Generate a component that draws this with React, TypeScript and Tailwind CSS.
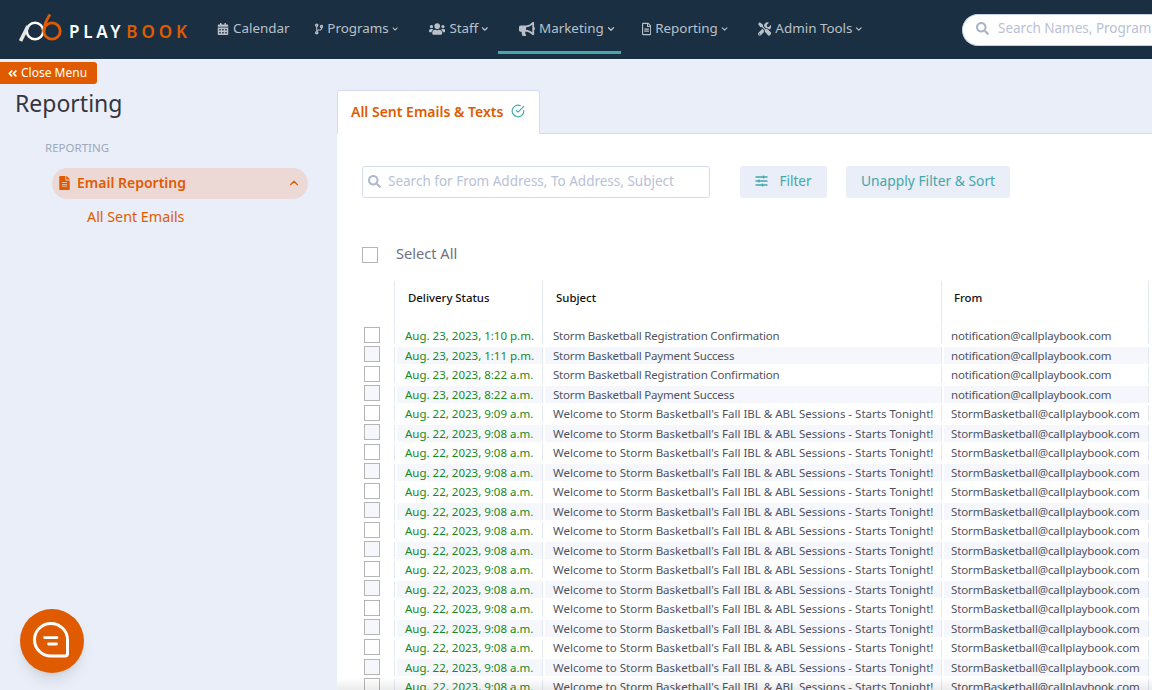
import React from "react";
import { FaCalendarAlt, FaUsers, FaBullhorn, FaTools, FaSearch, FaFileAlt, FaAngleDoubleLeft, FaRegFileAlt, FaCodeBranch } from "react-icons/fa";
import { FiChevronDown, FiChevronUp, FiCheckCircle } from "react-icons/fi";

const font = "font-['Noto_Sans',sans-serif]";

function Nav({ icon, label, active, w }: { icon: React.ReactNode; label: string; active?: boolean; w: string }) {
  return (
    <div className={`relative flex h-full shrink-0 items-center gap-1 whitespace-nowrap pb-[2px] text-[13.4px] text-[#b9c0c9] ${w}`}>
      {icon}
      <span>{label}</span>
      {label !== "Calendar" && <FiChevronDown className="-ml-[2px] h-2.5 w-2.5" strokeWidth={3} />}
      {active && <div className="absolute bottom-[5px] left-0 h-[3px] w-full bg-[#43a7ab]" />}
    </div>
  );
}

const first = [
  ["Aug. 23, 2023, 1:10 p.m.", "Storm Basketball Registration Confirmation", "notification@callplaybook.com"],
  ["Aug. 23, 2023, 1:11 p.m.", "Storm Basketball Payment Success", "notification@callplaybook.com"],
  ["Aug. 23, 2023, 8:22 a.m.", "Storm Basketball Registration Confirmation", "notification@callplaybook.com"],
  ["Aug. 23, 2023, 8:22 a.m.", "Storm Basketball Payment Success", "notification@callplaybook.com"],
  ["Aug. 22, 2023, 9:09 a.m.", "Welcome to Storm Basketball's Fall IBL & ABL Sessions - Starts Tonight!", "StormBasketball@callplaybook.com"],
];
const rows = [
  ...first,
  ...Array.from({ length: 14 }, () => [
    "Aug. 22, 2023, 9:08 a.m.",
    "Welcome to Storm Basketball's Fall IBL & ABL Sessions - Starts Tonight!",
    "StormBasketball@callplaybook.com",
  ]),
];

export default function App() {
  return (
    <div className={`relative h-[690px] w-[1152px] overflow-hidden bg-[#e9eef8] ${font}`}>
      <header className="flex h-[59px] items-center bg-[#1a3042] pl-[19px]">
        <svg width="46" height="34" viewBox="19 12 46 34" className="mr-[4px] shrink-0" fill="none">
          <circle cx="35" cy="30" r="8.2" stroke="#fff" strokeWidth="2.4" />
          <path d="M20.5 40 L28 25" stroke="#e6e6e6" strokeWidth="3.6" />
          <circle cx="52" cy="30" r="8.2" stroke="#e05b00" strokeWidth="2.8" />
          <path d="M43.8 30 C44 23 47 18 50 13.5" stroke="#e05b00" strokeWidth="2.8" />
        </svg>
        <div className="mr-[28px] mt-[3px] flex w-[120px] shrink-0 text-[17px] font-semibold leading-none">
          <span className="tracking-[0.22em] text-white">PLAY</span>
          <span className="ml-[2px] tracking-[0.23em] text-[#e05b00]">BOOK</span>
        </div>
        <Nav w="w-[73px]" label="Calendar" icon={<FaCalendarAlt className="h-3 w-3" />} />
        <Nav w="w-[84px] ml-[25px]" label="Programs" icon={<FaCodeBranch className="h-[14px] w-[10px]" />} />
        <Nav w="w-[61px] ml-[30px]" label="Staff" icon={<FaUsers className="h-4 w-[17px]" />} />
        <Nav w="w-[123px] ml-[8px] pl-[21px]" active label="Marketing" icon={<FaBullhorn className="h-4 w-4" />} />
        <Nav w="w-[87px] ml-[21px]" label="Reporting" icon={<FaRegFileAlt className="h-[14px] w-[10px]" />} />
        <Nav w="w-[106px] ml-[29px]" label="Admin Tools" icon={<FaTools className="h-3.5 w-3.5" />} />
        <div className="ml-[98px] flex h-[32px] min-w-0 flex-1 items-center overflow-hidden whitespace-nowrap rounded-l-full border border-r-0 border-[#c9d2e4] bg-white pb-[2px] pl-[13px] text-[13.5px] text-[#b8c1d8]">
          <FaSearch className="mr-[9px] h-[13px] w-[13px] shrink-0 text-[#aab4c8]" />
          Search Names, Programs
        </div>
      </header>

      <div className="flex h-[631px]">
        <aside className="relative w-[337px] shrink-0">
          <div className="absolute left-0 top-[3px] flex h-[22px] w-[97px] items-center gap-[3px] rounded-r-[3px] bg-[#e05b00] pl-[7px] text-[12px] text-white">
            <FaAngleDoubleLeft className="h-[11px] w-[11px]" />
            Close Menu
          </div>
          <h1 className="pl-[15px] pt-[28px] text-[23px] leading-[32px] text-[#33363f]">Reporting</h1>
          <div className="pl-[45px] pt-[21px] text-[11.5px] leading-[16px] text-[#a0a8bc]">REPORTING</div>
          <div className="ml-[52px] mt-[12px] flex h-[31px] w-[256px] items-center rounded-full bg-[#ecd9d5] pl-[7px] pr-[7px] pb-[2px] text-[14px] font-semibold text-[#e05b00]">
            <FaFileAlt className="mr-[7px] h-[14px] w-[11px]" />
            Email Reporting
            <FiChevronUp className="ml-auto h-3.5 w-3.5" strokeWidth={2} />
          </div>
          <div className="pl-[87px] pt-[8px] text-[14.3px] leading-[20px] text-[#e05b00]">All Sent Emails</div>
        </aside>

        <main className="flex min-w-0 flex-1 flex-col">
          <div className="flex h-[75px] shrink-0 items-end border-b border-[#d5dcef] pt-[31px]">
            <div className="-mb-px flex h-[44px] w-[203px] items-center gap-[8px] rounded-t-[3px] border border-b-0 border-[#d5dcef] bg-white pb-[3px] pl-[13px] text-[14px] font-semibold text-[#e05b00]">
              All Sent Emails &amp; Texts
              <FiCheckCircle className="h-[14px] w-[14px] text-[#43a7ab]" />
            </div>
          </div>
          <div className="flex-1 overflow-hidden bg-white pl-[25px]">
            <div className="mt-[32px] flex h-[32px] items-center">
              <div className="flex h-[32px] w-[348px] items-center rounded-[3px] border border-[#d5dcef] pb-[2px] pl-[5px] text-[13.5px] text-[#b8c1d8]">
                <FaSearch className="mr-[7px] h-[13px] w-[13px] text-[#b0b9cd]" />
                Search for From Address, To Address, Subject
              </div>
              <div className="ml-[30px] flex h-[32px] w-[87px] items-center justify-center gap-[11px] rounded-[3px] bg-[#e9eef8] pb-[2px] text-[13.5px] text-[#43a7ab]">
                <svg width="13" height="12" viewBox="0 0 13 12" stroke="currentColor" strokeWidth="1.3" fill="none">
                  <path d="M0.5 2 H12.5 M0.5 6 H12.5 M0.5 10 H12.5 M8.5 0.5 V3.5 M4 4.5 V7.5 M7.5 8.5 V11.5" />
                </svg>
                Filter
              </div>
              <div className="ml-[19px] flex h-[32px] w-[164px] items-center justify-center rounded-[3px] bg-[#e9eef8] pb-[2px] text-[13.8px] text-[#43a7ab]">
                Unapply Filter &amp; Sort
              </div>
            </div>
            <div className="mt-[41px] flex h-[32px] items-center">
              <div className="h-4 w-4 border border-[#b5b5b5]" />
              <span className="ml-[18px] pb-[2px] text-[14.6px] text-[#6c7285]">Select All</span>
            </div>
            <div className="mt-[10px] flex h-[45px] text-[11.4px] font-medium text-[#111]">
              <div className="w-[32px] shrink-0" />
              <div className="w-[148px] shrink-0 border-l border-[#e3e8f5] pl-[13px] pt-[8px]">Delivery Status</div>
              <div className="w-[399px] shrink-0 border-l border-[#e3e8f5] pl-[13px] pt-[8px]">Subject</div>
              <div className="w-[208px] shrink-0 border-x border-[#e3e8f5] pl-[12px] pt-[8px]">From</div>
            </div>
            <div className="flex flex-col text-[11.5px]">
              {rows.map((r, i) => {
                const alt = i % 2 === 1 ? "bg-[#f5f7fc]" : "";
                const subjectTrack = i < 4 ? "tracking-[-0.19px]" : "";
                const fromTrack = i < 4 ? "tracking-[-0.17px]" : "tracking-[-0.125px]";
                return (
                  <div key={i} className="flex h-[19.53px] shrink-0 items-center whitespace-nowrap">
                    <div className="w-[32px] shrink-0">
                      <div className={`-mt-[2px] ml-[2px] h-4 w-4 border border-[#b5b5b5] ${alt}`} />
                    </div>
                    <div className="flex h-[17px] w-[148px] shrink-0 border-l border-[#e3e8f5] pl-[2px]">
                      <div className={`flex flex-1 items-center pl-[8px] text-[#17891f] ${alt}`}>{r[0]}</div>
                    </div>
                    <div className="flex h-[17px] w-[399px] shrink-0 border-l border-[#e3e8f5] pl-[2px]">
                      <div className={`flex flex-1 items-center pl-[8px] text-[#50535f] ${subjectTrack} ${alt}`}>{r[1]}</div>
                    </div>
                    <div className="flex h-[17px] w-[208px] shrink-0 border-x border-[#e3e8f5] pl-[2px]">
                      <div className={`flex flex-1 items-center pl-[7px] text-[#50535f] ${fromTrack} ${alt}`}>{r[2]}</div>
                    </div>
                  </div>
                );
              })}
            </div>
          </div>
        </main>
      </div>

      <div className="pointer-events-none absolute bottom-0 left-[337px] right-0 h-[12px] bg-gradient-to-b from-transparent to-[#00000014]" />
      <div className="absolute left-[20px] top-[609px] flex h-16 w-16 items-center justify-center rounded-full bg-[#e05b00] shadow-lg">
        <svg width="38" height="38" viewBox="0 0 38 38" fill="none" stroke="#fff">
          <path d="M18 1.5 C9 1.5 1.5 8.7 1.5 17.7 C1.5 26.7 9 34 18 34 H32 C33.7 34 34.5 33 34.5 31.5 V17.7 C34.5 8.7 27 1.5 18 1.5 Z" strokeWidth="3" />
          <path d="M11.5 15.6 H24 M15.5 22 H23.5" strokeWidth="2.8" strokeLinecap="round" />
        </svg>
      </div>
    </div>
  );
}
